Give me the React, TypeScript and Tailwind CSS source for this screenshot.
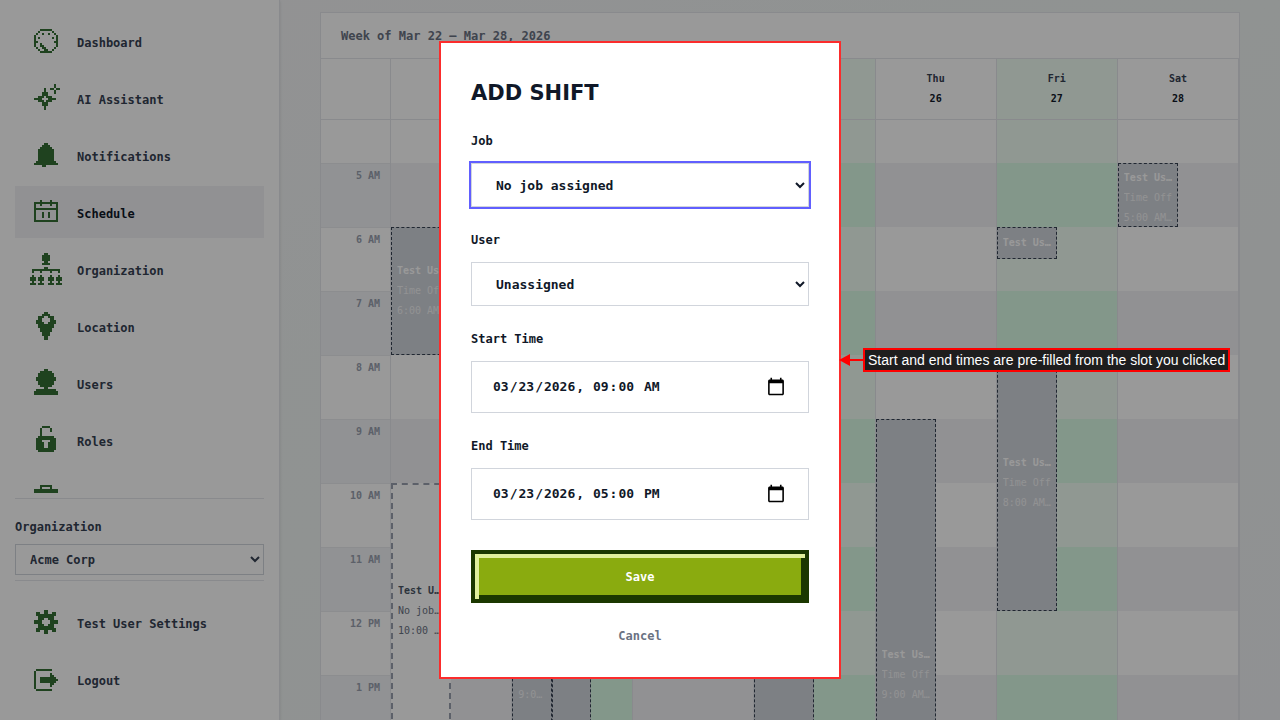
import { useState } from 'react'

type Shift = {
  start: number
  end: number
  left: number
  width: number
  name: string
  job: string
  time: string
  open?: boolean
}

type Day = {
  label: string
  date: number
  highlighted?: boolean
  shifts: Shift[]
}

const HOUR_HEIGHT = 64
const FIRST_HOUR = 5

// 16x16 bitmaps, one string per row
const ICONS: Record<string, string[]> = {
  dashboard: [
    '................',
    '................',
    '.....######.....',
    '....#......#....',
    '...#..#..#..#...',
    '..#..........#..',
    '..#.#......#.#..',
    '..#..........#..',
    '..##........##..',
    '..#..#.......#..',
    '..#..##......#..',
    '...#..##....#...',
    '....#..##..#....',
    '.....######.....',
  ],
  assistant: [
    '................',
    '............#...',
    '............#...',
    '.......#..##.##.',
    '.......#....#...',
    '......###...#...',
    '......###.......',
    '....###.###.....',
    '..####...####...',
    '....###.###.....',
    '......###.......',
    '......###.......',
    '.......#........',
    '.......#........',
  ],
  bell: [
    '................',
    '................',
    '.......##.......',
    '......####......',
    '.....######.....',
    '....########....',
    '....########....',
    '....########....',
    '....########....',
    '....########....',
    '....########....',
    '...##########...',
    '..############..',
    '......##........',
  ],
  calendar: [
    '................',
    '................',
    '.....#....#.....',
    '..############..',
    '..#..#....#..#..',
    '..#..........#..',
    '..############..',
    '..#..........#..',
    '..#...#..#...#..',
    '..#...#..#...#..',
    '..#...#..#...#..',
    '..#..........#..',
    '..############..',
  ],
  organization: [
    '.......##.......',
    '......####......',
    '......####......',
    '......####......',
    '.......##.......',
    '......####......',
    '................',
    '.......##.......',
    '.##############.',
    '.#...#....#...#.',
    '................',
    '.#...#....#...#.',
    '###.###..###.###',
    '###.###..###.###',
    '.#...#....#...#.',
    '###.###..###.###',
  ],
  location: [
    '................',
    '.......##.......',
    '......####......',
    '....###..###....',
    '....##....##....',
    '...###....###...',
    '...####..####...',
    '....########....',
    '....########....',
    '.....######.....',
    '.....######.....',
    '......####......',
    '......####......',
    '.......##.......',
    '.......##.......',
  ],
  users: [
    '................',
    '.......##.......',
    '.....######.....',
    '....########....',
    '....########....',
    '...##########...',
    '...##########...',
    '....########....',
    '....########....',
    '.....######.....',
    '.......##.......',
    '...##########...',
    '..############..',
    '..############..',
  ],
  lock: [
    '................',
    '......####......',
    '.....#....#.....',
    '.....#....#.....',
    '.....#..........',
    '.....#..........',
    '....########....',
    '...##########...',
    '...###....###...',
    '...####..####...',
    '...####..####...',
    '...####..####...',
    '...##########...',
    '....########....',
  ],
  briefcase: [
    '................',
    '................',
    '.....######.....',
    '.....#....#.....',
    '..############..',
    '..############..',
    '..############..',
    '................',
    '..############..',
    '..############..',
    '..############..',
    '..############..',
    '..############..',
  ],
  settings: [
    '................',
    '................',
    '.......##.......',
    '...##..##..##...',
    '...##########...',
    '....########....',
    '....###..###....',
    '..####....####..',
    '..####....####..',
    '....###..###....',
    '....########....',
    '...##########...',
    '...##..##..##...',
    '.......##.......',
  ],
  logout: [
    '................',
    '................',
    '................',
    '...########.....',
    '..#.............',
    '..#.......#.....',
    '..#.......##....',
    '..#..########...',
    '..#..#########..',
    '..#..########...',
    '..#.......##....',
    '..#.......#.....',
    '..#.............',
    '...########.....',
  ],
}

const NAV_ITEMS = [
  { label: 'Dashboard', icon: 'dashboard' },
  { label: 'AI Assistant', icon: 'assistant' },
  { label: 'Notifications', icon: 'bell' },
  { label: 'Schedule', icon: 'calendar' },
  { label: 'Organization', icon: 'organization' },
  { label: 'Location', icon: 'location' },
  { label: 'Users', icon: 'users' },
  { label: 'Roles', icon: 'lock' },
  { label: 'Jobs', icon: 'briefcase' },
]

const HOURS = ['5 AM', '6 AM', '7 AM', '8 AM', '9 AM', '10 AM', '11 AM', '12 PM', '1 PM']

const timeOff = (start: number, end: number, time: string, left = 0, width = 50): Shift => ({
  start,
  end,
  left,
  width,
  name: 'Test User',
  job: 'Time Off',
  time,
})

const DAYS: Day[] = [
  {
    label: 'Sun',
    date: 22,
    shifts: [
      timeOff(6, 8, '6:00 AM - 8:00 AM'),
      { start: 10, end: 14, left: 0, width: 50, name: 'Test User', job: 'No job assigned', time: '10:00 AM - 2:00 PM', open: true },
    ],
  },
  {
    label: 'Mon',
    date: 23,
    highlighted: true,
    shifts: [timeOff(9, 17, '9:00 AM - 5:00 PM', 0, 33), timeOff(8, 16, '8:00 AM - 4:00 PM', 33, 33)],
  },
  { label: 'Tue', date: 24, shifts: [] },
  { label: 'Wed', date: 25, highlighted: true, shifts: [timeOff(8, 16, '8:00 AM - 4:00 PM')] },
  { label: 'Thu', date: 26, shifts: [timeOff(9, 17, '9:00 AM - 5:00 PM')] },
  {
    label: 'Fri',
    date: 27,
    highlighted: true,
    shifts: [timeOff(6, 6.5, '6:00 AM - 6:30 AM'), timeOff(8, 12, '8:00 AM - 12:00 PM')],
  },
  { label: 'Sat', date: 28, shifts: [timeOff(5, 6, '5:00 AM - 6:00 AM')] },
]

function PixelIcon({ name }: { name: string }) {
  return (
    <svg viewBox="0 0 16 16" className="w-8 h-8 shrink-0 fill-[#346e34]" shapeRendering="crispEdges" aria-hidden="true">
      {ICONS[name].flatMap((row, y) =>
        row.split('').map((cell, x) => (cell === '#' ? <rect key={`${x}-${y}`} x={x} y={y} width="1" height="1" /> : null))
      )}
    </svg>
  )
}

function NavLink({ label, icon, active }: { label: string; icon: string; active?: boolean }) {
  return (
    <a
      href="#"
      className={`flex items-center shrink-0 gap-[15px] h-[52px] px-[15px] text-xs font-bold ${
        active ? 'bg-[#f2f2f5] text-gray-900' : 'text-gray-700'
      }`}
    >
      <PixelIcon name={icon} />
      <span className="pt-[3px]">{label}</span>
    </a>
  )
}

function Sidebar() {
  return (
    <aside className="flex flex-col w-[280px] shrink-0 p-[15px] bg-white border-r border-gray-200 shadow-sm">
      <nav className="flex flex-col flex-1 min-h-0 gap-[5px] overflow-hidden">
        {NAV_ITEMS.map((item) => (
          <NavLink key={item.label} label={item.label} icon={item.icon} active={item.label === 'Schedule'} />
        ))}
      </nav>

      <div className="flex flex-col mt-[5px] pt-[18px] pb-[5px] border-y border-gray-200">
        <label htmlFor="organization" className="text-xs leading-5 font-bold text-gray-700">
          Organization
        </label>
        <select
          id="organization"
          className="mt-[7px] h-[31px] px-[10px] bg-white border border-gray-300 text-xs font-bold text-gray-700"
        >
          <option>Acme Corp</option>
        </select>
      </div>

      <div className="flex flex-col gap-[5px] pt-[15px]">
        <NavLink label="Test User Settings" icon="settings" />
        <NavLink label="Logout" icon="logout" />
      </div>
    </aside>
  )
}

function ShiftBlock({ shift }: { shift: Shift }) {
  const height = (shift.end - shift.start) * HOUR_HEIGHT

  return (
    <div
      className={`absolute flex flex-col py-1 pl-[5px] pr-[3px] overflow-hidden border-dashed text-[10px] leading-5 ${
        shift.open ? 'border-2 border-gray-400 bg-white text-gray-500' : 'border border-gray-700 bg-gray-300 text-gray-100'
      }`}
      style={{
        top: (shift.start - FIRST_HOUR) * HOUR_HEIGHT,
        height,
        left: `${shift.left}%`,
        width: `${shift.width}%`,
      }}
    >
      <div className="my-auto">
        <p className={`truncate font-bold ${shift.open ? 'text-gray-600' : 'text-white'}`}>{shift.name}</p>
        {height > HOUR_HEIGHT / 2 && (
          <>
            <p className="truncate">{shift.job}</p>
            <p className="truncate">{shift.time}</p>
          </>
        )}
      </div>
    </div>
  )
}

function DayColumn({ day }: { day: Day }) {
  return (
    <div className={`border-r border-gray-200 ${day.highlighted ? 'bg-green-50' : 'bg-white'}`}>
      <div className="h-[43px]" />
      <div className="relative">
        {HOURS.map((hour, i) => (
          <div
            key={hour}
            className={`h-16 ${i % 2 ? '' : day.highlighted ? 'bg-green-100' : 'bg-[#f2f2f5]'}`}
          />
        ))}
        {day.shifts.map((shift) => (
          <ShiftBlock key={shift.start} shift={shift} />
        ))}
      </div>
    </div>
  )
}

function Calendar() {
  return (
    <section className="bg-white border border-gray-200">
      <h2 className="flex items-center h-[46px] px-5 border-b border-gray-200 text-xs font-bold text-gray-500">
        Week of Mar 22 – Mar 28, 2026
      </h2>

      <div className="grid grid-cols-[70px_repeat(7,minmax(0,1fr))] border-b border-gray-200">
        <div className="border-r border-gray-200" />
        {DAYS.map((day) => (
          <div
            key={day.label}
            className={`py-[10px] border-r border-gray-200 text-center text-[10px] leading-5 font-bold ${
              day.highlighted ? 'bg-green-50' : ''
            }`}
          >
            <p className="text-gray-700">{day.label}</p>
            <p className="text-gray-900">{day.date}</p>
          </div>
        ))}
      </div>

      <div className="grid grid-cols-[70px_repeat(7,minmax(0,1fr))]">
        <div className="border-r border-gray-200">
          <div className="h-[43px]" />
          {HOURS.map((hour, i) => (
            <div
              key={hour}
              className={`h-16 pt-[2px] pr-[10px] border-t border-[#e9ebee] text-right text-[10px] leading-5 font-bold text-gray-400 ${
                i % 2 ? '' : 'bg-[#f2f4f7]'
              }`}
            >
              {hour}
            </div>
          ))}
        </div>
        {DAYS.map((day) => (
          <DayColumn key={day.label} day={day} />
        ))}
      </div>
    </section>
  )
}

function SelectField({ id, label, option, focused }: { id: string; label: string; option: string; focused?: boolean }) {
  return (
    <div className="flex flex-col gap-3">
      <label htmlFor={id} className="text-xs leading-5 font-bold text-gray-900">
        {label}
      </label>
      <select
        id={id}
        className={`h-11 px-5 bg-white border border-gray-300 text-[13px] font-bold text-gray-900 ${
          focused ? 'outline-2 outline-[#615fff]' : 'outline-none'
        }`}
      >
        <option>{option}</option>
      </select>
    </div>
  )
}

function DateField({ id, label, value, onChange }: { id: string; label: string; value: string; onChange: (v: string) => void }) {
  return (
    <div className="flex flex-col gap-3">
      <label htmlFor={id} className="text-xs leading-5 font-bold text-gray-900">
        {label}
      </label>
      <input
        id={id}
        type="datetime-local"
        value={value}
        onChange={(e) => onChange(e.target.value)}
        className="h-[52px] px-5 bg-white border border-gray-300 text-[13px] font-bold text-gray-900 [&::-webkit-calendar-picker-indicator]:w-5 [&::-webkit-calendar-picker-indicator]:h-5"
      />
    </div>
  )
}

function AddShiftModal() {
  const [startTime, setStartTime] = useState('2026-03-23T09:00')
  const [endTime, setEndTime] = useState('2026-03-23T17:00')

  return (
    <div className="fixed inset-0 flex items-center justify-center bg-black/40">
      <div role="dialog" aria-labelledby="add-shift" className="relative w-[402px] px-[30px] pt-9 pb-[31px] bg-white border-2 border-[#fb2c2c]">
        <form className="flex flex-col gap-[23px]" onSubmit={(e) => e.preventDefault()}>
          <h1 id="add-shift" className="font-['DejaVu_Sans',sans-serif] text-[21px] leading-[29px] font-bold text-gray-900">
            ADD SHIFT
          </h1>

          <SelectField id="job" label="Job" option="No job assigned" focused />
          <SelectField id="user" label="User" option="Unassigned" />
          <DateField id="start" label="Start Time" value={startTime} onChange={setStartTime} />
          <DateField id="end" label="End Time" value={endTime} onChange={setEndTime} />

          <div className="flex flex-col gap-[23px] pt-[7px]">
            <button
              type="submit"
              className="h-[53px] bg-[#8aab0f] border-4 border-[#1b3800] shadow-[inset_4px_4px_0_#e0f09c,inset_-4px_-4px_0_#1b3800] text-xs font-bold text-white"
            >
              Save
            </button>
            <button type="button" className="self-center text-xs leading-5 font-bold text-gray-500">
              Cancel
            </button>
          </div>
        </form>

        {/* Callout */}
        <div className="absolute left-full top-1/2 -translate-y-1/2 flex items-center">
          <svg viewBox="0 0 24 12" className="w-6 h-3 shrink-0 fill-[#ff0000]" aria-hidden="true">
            <path d="M0 6 11 0v12z" />
            <path d="M10 5h14v2H10z" />
          </svg>
          <p className="px-[3px] bg-[#1e1e1e] border-2 border-[#ff0000] font-['Liberation_Sans',sans-serif] text-sm leading-5 text-white whitespace-nowrap">
            Start and end times are pre-filled from the slot you clicked
          </p>
        </div>
      </div>
    </div>
  )
}

export default function App() {
  return (
    <div className="flex h-screen overflow-hidden bg-linear-to-br from-[#f4f4f7] via-[#f0f5f3] to-[#f1f2f5] font-['DejaVu_Sans_Mono',monospace]">
      <Sidebar />
      <main className="flex-1 min-w-0 px-10 pt-3 overflow-hidden">
        <Calendar />
      </main>
      <AddShiftModal />
    </div>
  )
}
